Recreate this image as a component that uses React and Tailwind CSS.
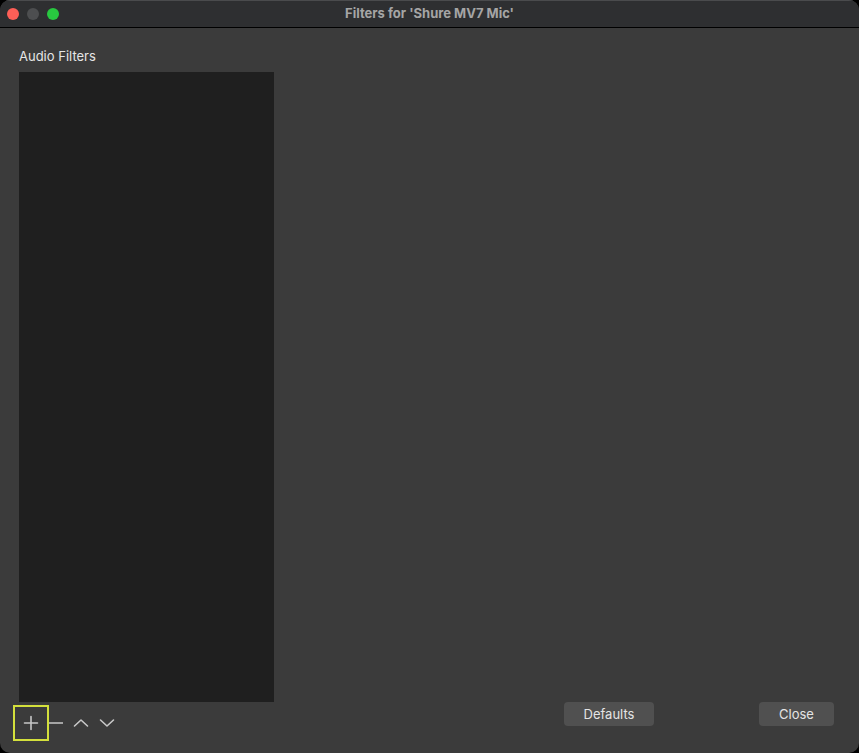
import React from 'react';

function TrafficLights() {
  return (
    <div className="flex items-center gap-2 pl-[7px]">
      <span className="w-3 h-3 rounded-full bg-[#fe5f57]" />
      <span className="w-3 h-3 rounded-full bg-[#4d4e50]" />
      <span className="w-3 h-3 rounded-full bg-[#28c840]" />
    </div>
  );
}

function ToolIcon({ children }) {
  return (
    <svg width="16" height="16" viewBox="0 0 16 16" fill="none" stroke="#c8c8c8" strokeWidth="1.6" strokeLinecap="round" strokeLinejoin="round">
      {children}
    </svg>
  );
}

export default function App() {
  return (
    <div className="w-[859px] h-[753px] bg-black" style={{ fontFamily: 'Inter, "Open Sans", "Liberation Sans", sans-serif' }}>
      <div className="w-full h-full bg-[#3b3b3b] rounded-[10px] overflow-hidden flex flex-col">
        {/* Title bar */}
        <div className="h-[28px] shrink-0 bg-[#2e2f31] border-t border-[#4a4b4d] border-b border-b-black flex items-center relative">
          <TrafficLights />
          <div className="absolute inset-0 flex items-center justify-center text-[13px] font-bold text-[#a5a5a5]">
            Filters for 'Shure MV7 Mic'
          </div>
        </div>

        {/* Body */}
        <div className="flex-1 flex flex-col pl-[19px] pr-[25px] pt-[18px]">
          <div className="text-[13px] text-[#e6e6e6] leading-[20px] h-[26px]">Audio Filters</div>
          <div className="flex">
            <div className="w-[255px] h-[630px] bg-[#1f1f1f]" />
          </div>
          <div className="h-[51px] flex items-start">
            <div className="flex items-center -ml-[6px] mt-[3px]">
              <div className="w-[36px] h-[36px] border-2 border-[#d4e03c] flex items-center justify-center">
                <ToolIcon>
                  <path d="M8 1.5v13M1.5 8h13" />
                </ToolIcon>
              </div>
              <div className="w-[15px] flex items-center">
                <svg width="15" height="16" viewBox="0 0 15 16" fill="none" stroke="#c8c8c8" strokeWidth="1.6">
                  <path d="M0 8h14" />
                </svg>
              </div>
              <div className="ml-[9px]">
                <ToolIcon>
                  <path d="M1.5 11l6.5-6 6.5 6" />
                </ToolIcon>
              </div>
              <div className="ml-[10px]">
                <ToolIcon>
                  <path d="M1.5 5l6.5 6 6.5-6" />
                </ToolIcon>
              </div>
            </div>
            <div className="flex-1" />
            <button className="w-[90px] h-[24px] pt-px rounded-[4px] bg-[#505050] text-[13px] text-[#e4e4e4] flex items-center justify-center">
              Defaults
            </button>
            <div className="w-[105px]" />
            <button className="w-[75px] h-[24px] pt-px rounded-[4px] bg-[#505050] text-[13px] text-[#e4e4e4] flex items-center justify-center">
              Close
            </button>
          </div>
        </div>
      </div>
    </div>
  );
}
